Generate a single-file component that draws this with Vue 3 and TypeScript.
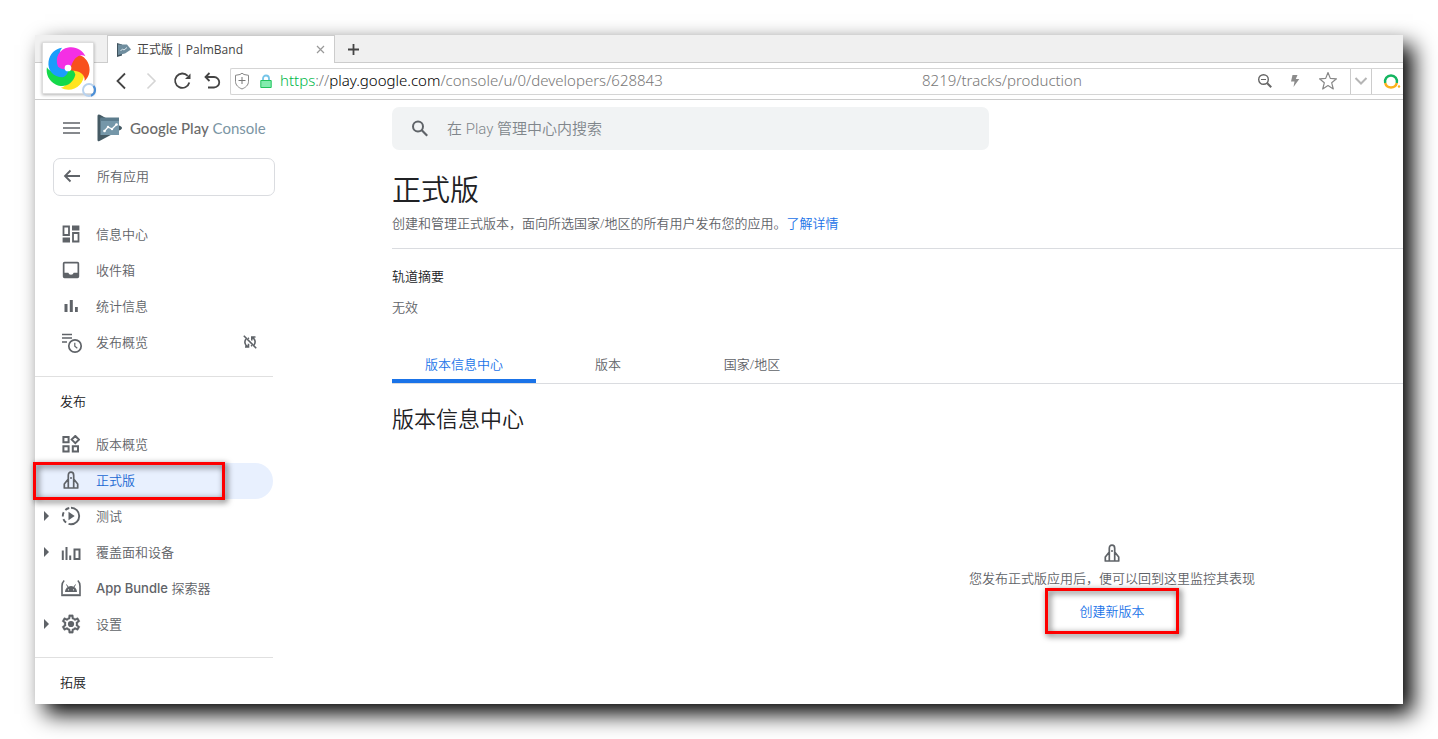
<script setup lang="ts">
import { ref } from 'vue'

interface NavItem {
  id: string
  label: string
  product?: string
  icon: string
  expandable?: boolean
  syncOff?: boolean
  marked?: boolean
}

const topItems: NavItem[] = [
  { id: 'dashboard', label: '信息中心', icon: 'dashboard' },
  { id: 'inbox', label: '收件箱', icon: 'inbox' },
  { id: 'stats', label: '统计信息', icon: 'stats' },
  { id: 'publishing', label: '发布概览', icon: 'publishing', syncOff: true },
]

const releaseItems: NavItem[] = [
  { id: 'overview', label: '版本概览', icon: 'overview' },
  { id: 'production', label: '正式版', icon: 'rocket', marked: true },
  { id: 'testing', label: '测试', icon: 'testing', expandable: true },
  { id: 'reach', label: '覆盖面和设备', icon: 'reach', expandable: true },
  { id: 'bundle', product: 'App Bundle', label: ' 探索器', icon: 'bundle' },
  { id: 'setup', label: '设置', icon: 'setup', expandable: true },
]

const groups = [
  { title: '', items: topItems },
  { title: '发布', items: releaseItems },
  { title: '拓展', items: [] as NavItem[] },
]

const tabs = ['版本信息中心', '版本', '国家/地区']
const activeTab = ref(0)
const activeItem = ref('production')
const query = ref('')

const petals = [
  { color: '#ffe51f', angle: 134 },
  { color: '#14d94a', angle: 206 },
  { color: '#1b9dfb', angle: 278 },
  { color: '#f8501d', angle: 62 },
  { color: '#f42fe4', angle: -10 },
]
</script>

<template>
  <div class="page">
    <div class="window">
      <header class="chrome">
        <div class="tab-strip">
          <div class="browser-tab">
            <svg class="favicon" viewBox="0 0 14 14" aria-hidden="true">
              <path d="M0 0l5 1.5v11L0 14z" fill="#3f525d" />
              <path d="M1 1.500h9l4 5L8 10.500 1 12z" fill="#6f8d9e" />
              <path d="M3.500 8l2-2 1.500 1 3-2.500" fill="none" stroke="#dce8ee" />
            </svg>
            <span class="tab-title">正式版 | PalmBand</span>
            <button class="tab-close" aria-label="关闭标签页">
              <svg width="9" height="9" viewBox="0 0 9 9"><path d="M1 1l7 7M8 1L1 8" fill="none" stroke="#999" stroke-width="1.200" /></svg>
            </button>
          </div>
          <button class="new-tab" aria-label="新建标签页">
            <svg width="11" height="11" viewBox="0 0 11 11"><path d="M5.500 0v11M0 5.500h11" fill="none" stroke="#444" stroke-width="1.800" /></svg>
          </button>
        </div>

        <div class="toolbar">
          <button class="tool" aria-label="后退">
            <svg width="20" height="20" viewBox="0 0 20 20"><path d="M14 2.500L6.500 10l7.500 7.500" fill="none" stroke="#444" stroke-width="1.800" /></svg>
          </button>
          <button class="tool" aria-label="前进">
            <svg width="20" height="20" viewBox="0 0 20 20"><path d="M6.500 2.500L14 10l-7.500 7.500" fill="none" stroke="#d5d5d5" stroke-width="1.600" /></svg>
          </button>
          <button class="tool reload" aria-label="刷新">
            <svg width="20" height="20" viewBox="0 0 20 20">
              <path d="M17.300 11.500a7.200 7.200 0 1 1-1.600-6.600" fill="none" stroke="#444" stroke-width="1.800" />
              <path d="M18.500 2.500v5.500H13z" fill="#444" />
            </svg>
          </button>
          <button class="tool undo" aria-label="撤销">
            <svg width="20" height="20" viewBox="0 0 20 20"><path d="M7.500 2L3.500 6l4 4M3.500 6h8.500a5 5 0 0 1 0 10.500H6" fill="none" stroke="#444" stroke-width="1.800" /></svg>
          </button>

          <div class="address">
            <svg class="shield" width="16" height="18" viewBox="0 0 16 18">
              <path d="M8 1.200l2 1.300 4.500.8v6c0 4-3 6.200-6.500 7.700C4.500 15.500 1.500 13.300 1.500 9.300v-6L6 2.500z" fill="none" stroke="#888" />
              <path d="M8 5v7M4.500 8.500h7" fill="none" stroke="#777" />
            </svg>
            <svg class="lock" width="12" height="15" viewBox="0 0 12 15">
              <path d="M3 7V4.500a3 3 0 0 1 6 0V7" fill="none" stroke="#74c4e8" stroke-width="1.800" />
              <path d="M.8 6.500h10.400v7H.8z" fill="#83ecae" stroke="#21c45d" />
            </svg>
            <span class="url url-head"><span class="scheme">https</span>://<span class="host">play.google.com</span>/console/u/0/developers/628843</span>
            <span class="url url-tail">8219/tracks/production</span>
            <button class="tool" aria-label="缩小">
              <svg width="16" height="16" viewBox="0 0 16 16"><circle cx="6.500" cy="6.500" r="4.800" fill="none" stroke="#666" stroke-width="1.400" /><path d="M10.200 10.200l4 4" stroke="#666" stroke-width="2" /><path d="M4 6.500h5" stroke="#666" /></svg>
            </button>
            <button class="tool" aria-label="极速模式">
              <svg width="10" height="14" viewBox="0 0 10 14"><path d="M2.500 1h5L5.800 5h3.500L3.500 13l1-5.500H1z" fill="#8c8c8c" /></svg>
            </button>
            <button class="tool star" aria-label="收藏">
              <svg width="20" height="20" viewBox="0 0 20 20"><path d="M10 1.500l2.300 5.900 6.200.4-4.800 4 1.600 6.200L10 14.600 4.700 18l1.600-6.200-4.800-4 6.200-.4z" fill="none" stroke="#888" stroke-width="1.200" stroke-linejoin="round" /></svg>
            </button>
            <button class="drop" aria-label="更多">
              <svg width="14" height="10" viewBox="0 0 14 10"><path d="M1.500 2L7 7.500 12.500 2" fill="none" stroke="#b5b5b5" stroke-width="2" /></svg>
            </button>
            <button class="engine" aria-label="搜索引擎">
              <svg width="18" height="18" viewBox="0 0 18 18">
                <path d="M2.200 11A6 6 0 1 1 13.800 11" fill="none" stroke="#14b560" stroke-width="2.500" />
                <path d="M2.200 11A6 6 0 0 0 13.800 11" fill="none" stroke="#fbb01b" stroke-width="2.500" />
                <circle cx="16" cy="14.500" r="1.200" fill="#fbb01b" />
              </svg>
            </button>
          </div>
        </div>

        <div class="browser-logo">
          <svg viewBox="-26 -26 52 52" width="50" height="50">
            <g v-for="p in petals" :key="p.color" :transform="`rotate(${p.angle})`">
              <path d="M-10-3C-12-14-5-21 4-21 12-21 18-16 20-9 14-13 8-9 4-2L0 0Q-6 2-10-3z" :fill="p.color" />
            </g>
            <circle r="3.500" fill="#fff" />
          </svg>
        </div>
        <svg class="spinner" viewBox="0 0 16 16" width="16" height="16">
          <circle cx="8" cy="8" r="6" fill="none" stroke="#b8d2ee" stroke-width="2" />
          <path d="M12.500 4a6 6 0 0 1-2.500 9.700" fill="none" stroke="#4d8fd6" stroke-width="2" />
        </svg>
      </header>

      <div class="body">
        <aside class="sidebar">
          <div class="brand">
            <button class="menu" aria-label="菜单">
              <svg width="18" height="12" viewBox="0 0 18 12"><path d="M0 1h17M0 6h17M0 11h17" stroke="#5f6368" stroke-width="1.700" /></svg>
            </button>
            <svg class="brand-mark" width="26" height="28" viewBox="0 0 26 28">
              <path d="M1.500 0.500Q0.500 0.500 0.500 2v24Q0.500 28 2.500 27L24 15.500q2-1.500 0-3L3 .8z" fill="#455a64" />
              <path d="M3.500 4.500H22v16.500H3.500z" fill="#7597a9" />
              <path d="M3.500 3.500H22V7H3.500z" fill="#5c7c8d" />
              <path d="M7.500 17l3.500-4 4 2 4.500-4.500" fill="none" stroke="#fff" stroke-width="1.300" />
              <g fill="#fff"><circle cx="7.500" cy="17" r="1.300" /><circle cx="11" cy="13" r="1.200" /><circle cx="15" cy="15" r="1.200" /><circle cx="19.500" cy="10.500" r="1.300" /></g>
            </svg>
            <span class="brand-name"><b>Google Play</b> Console</span>
          </div>

          <button class="back">
            <svg width="18" height="14" viewBox="0 0 18 14"><path d="M17 7H2M7.500 1.500L2 7l5.500 5.500" fill="none" stroke="#5f6368" stroke-width="1.800" /></svg>
            <span class="label">所有应用</span>
          </button>

          <nav>
            <section v-for="g in groups" :key="g.title" class="group">
              <h3 v-if="g.title" class="group-title">{{ g.title }}</h3>
              <a
                v-for="item in g.items"
                :key="item.id"
                href="#"
                class="item"
                :class="{ active: activeItem === item.id }"
                @click.prevent="activeItem = item.id"
              >
                <span class="caret"><i v-if="item.expandable" /></span>
                <span class="glyph">
                  <svg v-if="item.icon === 'dashboard'" width="18" height="18" viewBox="0 0 18 18">
                    <path d="M1.500 1.500h5.500v8.500H1.500zM11 8h5.500v8.500H11z" fill="none" stroke="#5f6368" stroke-width="1.800" />
                    <path d="M10 .6h7.400v5H10zM.6 12.400H8v5H.6z" fill="#5f6368" />
                  </svg>
                  <svg v-else-if="item.icon === 'inbox'" width="18" height="18" viewBox="0 0 18 18">
                    <path fill-rule="evenodd" d="M2.500.8h13q1.700 0 1.700 1.700v13q0 1.700-1.700 1.700h-13Q.8 17.200.8 15.500v-13Q.8.800 2.500.8zM2.500 2.500v9.200h3.800a2.800 2.800 0 0 0 5.400 0h3.800V2.500z" fill="#5f6368" />
                  </svg>
                  <svg v-else-if="item.icon === 'stats'" width="18" height="18" viewBox="0 0 18 18">
                    <path d="M2.500 7h3v8h-3zM7.800 3h3v12h-3zM13 10h2.800v5H13z" fill="#5f6368" />
                  </svg>
                  <svg v-else-if="item.icon === 'publishing'" class="wide" width="22" height="22" viewBox="0 0 22 22">
                    <path d="M1 2.500h10M1 6h10M1 10h5" stroke="#5f6368" stroke-width="1.700" />
                    <circle cx="14" cy="14" r="6.200" fill="none" stroke="#5f6368" stroke-width="1.700" />
                    <path d="M13.800 10.800v3.500l2.500 2" fill="none" stroke="#5f6368" stroke-width="1.200" />
                  </svg>
                  <svg v-else-if="item.icon === 'overview'" width="18" height="18" viewBox="0 0 18 18">
                    <path d="M1.400 2h5.200v5.200H1.400zM1.400 11.300h5.200v5.200H1.400zM10.800 11.300H16v5.200h-5.200zM13.300 1l3.600 3.600-3.600 3.600-3.600-3.600z" fill="none" stroke="#5f6368" stroke-width="2" />
                  </svg>
                  <svg v-else-if="item.icon === 'rocket'" width="18" height="20" viewBox="0 0 18 20">
                    <path d="M6.300 18V5.500Q6.300 2.200 9 2.200t2.700 3.300V18M6.300 9L2.300 14v4h13.400v-4L11.700 9" fill="none" stroke="#5f6368" stroke-width="1.700" stroke-linejoin="round" />
                    <circle cx="9" cy="8" r="1" fill="#5f6368" />
                  </svg>
                  <svg v-else-if="item.icon === 'testing'" width="20" height="20" viewBox="0 0 20 20">
                    <path d="M10 1.800a8.200 8.200 0 0 1 0 16.400" fill="none" stroke="#5f6368" stroke-width="1.900" />
                    <path d="M10 1.800a8.200 8.200 0 0 0 0 16.400" fill="none" stroke="#5f6368" stroke-width="1.900" stroke-dasharray="4.400 2.700" stroke-dashoffset="-1.800" />
                    <path d="M7.500 5.800l6.200 4.200-6.200 4.200z" fill="#5f6368" />
                  </svg>
                  <svg v-else-if="item.icon === 'reach'" class="low" width="20" height="18" viewBox="0 0 20 18">
                    <path d="M.8 6.500h2V16h-2zM4.500 3h2v13h-2zM8.200 11.500h2V16h-2z" fill="#5f6368" />
                    <path d="M13.500 5.500h5V15h-5z" fill="none" stroke="#5f6368" stroke-width="2" />
                  </svg>
                  <svg v-else-if="item.icon === 'bundle'" width="20" height="18" viewBox="0 0 20 18">
                    <path d="M3.200 1.500Q1 3.500 1 7v8.500M19 15.500V7q0-3.500-2.200-5.500" fill="none" stroke="#5f6368" stroke-width="1.600" />
                    <path d="M.2 15.200h19.600v2H.2z" fill="#5f6368" />
                    <path d="M4 13a6 6 0 0 1 12 0z" fill="#5f6368" />
                    <path d="M5.500 5.500l1.800 3M14.500 5.500l-1.800 3" stroke="#5f6368" />
                    <circle cx="7.500" cy="10.800" r=".6" fill="#fff" /><circle cx="12.500" cy="10.800" r=".6" fill="#fff" />
                  </svg>
                  <svg v-else width="22" height="22" viewBox="0 0 24 24">
                    <path fill="#5f6368" stroke="#5f6368" stroke-width=".3" d="M19.430 12.980c.04-.32.07-.64.07-.98s-.03-.66-.07-.98l2.110-1.650c.19-.15.24-.42.12-.64l-2-3.460a.5.5 0 0 0-.61-.22l-2.490 1c-.52-.4-1.080-.73-1.690-.98l-.38-2.650A.488.488 0 0 0 14 2h-4c-.25 0-.46.18-.49.42l-.38 2.650c-.61.25-1.170.59-1.690.98l-2.490-1a.5.5 0 0 0-.61.22l-2 3.460c-.13.22-.07.49.12.64l2.110 1.650c-.04.32-.07.65-.07.98s.03.66.07.98l-2.110 1.650c-.19.15-.24.42-.12.64l2 3.460c.12.22.37.3.61.22l2.490-1c.52.4 1.080.73 1.690.98l.38 2.650c.03.24.24.42.49.42h4c.25 0 .46-.18.49-.42l.38-2.650c.61-.25 1.170-.59 1.690-.98l2.490 1c.24.08.49 0 .61-.22l2-3.460c.12-.22.07-.49-.12-.64zm-1.980-1.710c.04.31.05.52.05.73s-.02.43-.05.73l-.14 1.130.89.7 1.080.84-.7 1.210-1.270-.51-1.040-.42-.9.680c-.43.32-.84.56-1.250.73l-1.060.43-.16 1.130-.2 1.350h-1.400l-.35-2.480-1.060-.43c-.43-.18-.83-.41-1.230-.71l-.91-.7-1.060.43-1.270.51-.7-1.210 1.080-.84.89-.7-.14-1.130c-.03-.31-.05-.54-.05-.74s.02-.43.05-.73l.14-1.130-.89-.7-1.080-.84.7-1.210 1.270.51 1.040.42.9-.68c.43-.32.84-.56 1.250-.73l1.060-.43.16-1.130.2-1.350h1.390l.35 2.480 1.060.43c.43.18.83.41 1.230.71l.91.7 1.060-.43 1.270-.51.7 1.210-1.070.85-.89.7z" />
                    <circle cx="12" cy="12" r="3.400" fill="#5f6368" />
                  </svg>
                </span>
                <span class="label"><span v-if="item.product" class="product">{{ item.product }}</span>{{ item.label }}</span>
                <svg v-if="item.syncOff" class="sync-off" width="14" height="14" viewBox="0 0 14 14">
                  <path d="M.8.8l12.400 12.400" stroke="#5f6368" stroke-width="1.600" />
                  <path d="M3 4a5 5 0 0 0 1.500 7.500M2 12h3.500V8.800M11 10a5 5 0 0 0-1.500-7.500M12.500 2H8.800v3.500M6 3L5 3.600M8 11l1-.6" fill="none" stroke="#5f6368" stroke-width="1.600" />
                </svg>
                <span v-if="item.marked" class="mark" />
              </a>
            </section>
          </nav>
        </aside>

        <main class="main">
          <label class="search">
            <svg width="18" height="18" viewBox="0 0 18 18"><circle cx="7" cy="6.500" r="5" fill="none" stroke="#5f6368" stroke-width="2" /><path d="M10.800 10.300l5.400 5.400" stroke="#5f6368" stroke-width="2.200" /></svg>
            <input v-model="query" type="text" aria-label="搜索" placeholder="在 Play 管理中心内搜索" />
          </label>

          <div class="content">
            <div class="intro">
              <h1>正式版</h1>
              <p>创建和管理正式版本，面向所选国家/地区的所有用户发布您的应用。<a href="#">了解详情</a></p>
            </div>

            <div class="summary">
              <h4>轨道摘要</h4>
              <p>无效</p>
            </div>

            <div class="tabs" role="tablist">
              <button
                v-for="(t, i) in tabs"
                :key="t"
                role="tab"
                class="tab"
                :class="{ selected: activeTab === i }"
                :aria-selected="activeTab === i"
                @click="activeTab = i"
              >{{ t }}</button>
            </div>

            <h2>版本信息中心</h2>

            <div class="empty">
              <svg width="18" height="20" viewBox="0 0 18 20">
                <path d="M6.300 18V5.500Q6.300 2.200 9 2.200t2.700 3.300V18M6.300 9L2.300 14v4h13.400v-4L11.700 9" fill="none" stroke="#5f6368" stroke-width="1.700" stroke-linejoin="round" />
                <circle cx="9" cy="8" r="1" fill="#5f6368" />
              </svg>
              <p>您发布正式版应用后，便可以回到这里监控其表现</p>
              <button class="create">创建新版本<span class="mark" /></button>
            </div>
          </div>
        </main>
      </div>
    </div>
  </div>
</template>

<style>
body {
  margin: 0;
  background: #fff;
}
</style>

<style scoped>
* {
  box-sizing: border-box;
}

.page {
  display: flex;
  min-height: 100vh;
  padding: 35px;
  overflow: hidden;
  font: 350 13px/20px "Open Sans", "Noto Sans CJK SC", sans-serif;
  color: #5f6368;
}

button {
  padding: 0;
  border: 0;
  background: none;
  font: inherit;
  color: inherit;
  cursor: pointer;
}

h1, h2, h3, h4, p {
  margin: 0;
  font-weight: 350;
}

a {
  color: #1a73e8;
  text-decoration: none;
}

svg {
  display: block;
  flex: none;
}

.window {
  display: flex;
  flex: 1;
  flex-direction: column;
  min-width: 0;
  background: #fff;
  box-shadow: 10px 10px 21px #000;
}

/* Browser chrome */
.chrome {
  position: relative;
  border-bottom: 1px solid #ccc;
}

.tab-strip {
  display: flex;
  height: 28px;
  padding-left: 72px;
  background: #f0f0f0;
  box-shadow: inset 0 -1px #ccc;
}

.browser-tab {
  display: flex;
  align-items: center;
  width: 228px;
  padding: 0 9px;
  border: solid #ccc;
  border-width: 1px 1px 0;
  background: #fff;
}

.favicon {
  width: 14px;
  height: 14px;
}

.tab-title {
  flex: 1;
  margin-left: 6px;
  font-size: 12px;
  font-weight: 400;
  color: #444;
}

.new-tab {
  display: grid;
  place-items: center;
  width: 36px;
}

.toolbar {
  display: flex;
  align-items: center;
  height: 36px;
  padding-left: 71px;
}

.tool {
  display: grid;
  flex: none;
  place-items: center;
  width: 30px;
  height: 24px;
}

.reload {
  width: 32px;
}

.undo {
  width: 28px;
}

.address {
  display: flex;
  flex: 1;
  align-items: center;
  min-width: 0;
  height: 27px;
  margin-left: 4px;
  padding-left: 3px;
  overflow: hidden;
  border: solid #d5d5d5;
  border-width: 1px 0 1px 1px;
  border-radius: 2px 0 0 2px;
}

.lock {
  margin: 0 8px 0 10px;
}

.url {
  padding-bottom: 2px;
  font-family: "Noto Sans", sans-serif;
  font-size: 15px;
  font-weight: 300;
  white-space: nowrap;
  color: #777;
}

.url-head {
  width: 388px;
}

.url-tail {
  flex: 1;
  margin-left: 254px;
}

.scheme {
  color: #00b84a;
}

.host {
  color: #000;
}

.star {
  width: 36px;
  margin-right: 4px;
}

.drop {
  display: grid;
  flex: none;
  place-items: center;
  width: 22px;
  height: 25px;
  border: solid #ccc;
  border-width: 0 1px;
}

.engine {
  padding: 0 2px 0 11px;
}

.browser-logo {
  position: absolute;
  top: 7px;
  left: 7px;
  display: grid;
  place-items: center;
  width: 52px;
  height: 52px;
  border: 1px solid #ddd;
  background: #fff;
  box-shadow: 0 1px 3px rgba(0, 0, 0, 0.3);
}

.spinner {
  position: absolute;
  top: 47px;
  left: 46px;
}

/* Console layout */
.body {
  display: flex;
  flex: 1;
  min-width: 0;
}

.sidebar {
  flex: none;
  width: 240px;
}

.brand {
  display: flex;
  align-items: center;
  height: 58px;
  padding: 0 0 2px 28px;
}

.brand-mark {
  margin: 0 7px 0 16px;
}

.brand-name {
  font-family: Lato, sans-serif;
  font-size: 15px;
  font-weight: 400;
  white-space: nowrap;
  color: #7b95a3;
}

.brand-name b {
  font-weight: 500;
  color: #6b6b6b;
}

.back {
  display: flex;
  align-items: center;
  gap: 16px;
  width: 222px;
  height: 38px;
  margin: 0 0 21px 18px;
  padding: 0 9px 2px;
  border: 1px solid #dadce0;
  border-radius: 7px;
  text-align: left;
}

.group {
  width: 238px;
}

.group + .group {
  margin-top: 14px;
  border-top: 1px solid #e0e0e0;
}

.group:first-child {
  padding-bottom: 1px;
}

.group-title {
  padding: 14px 25px 16px;
  font-size: 13px;
  color: #202124;
}

.group:last-child .group-title {
  padding-bottom: 8px;
}

.item {
  position: relative;
  display: flex;
  align-items: center;
  height: 36px;
  padding-bottom: 2px;
  border-radius: 0 18px 18px 0;
  color: #5f6368;
}

.item.active {
  background: #e8f0fe;
  color: #1967d2;
}

.caret {
  display: grid;
  place-items: center;
  width: 22px;
}

.caret i {
  border: solid transparent;
  border-width: 5px 0 5px 5px;
  border-left-color: #5f6368;
}

.glyph {
  display: grid;
  place-items: center;
  width: 28px;
  margin-right: 11px;
}

.wide {
  margin: 2px 0 0 2px;
}

.low {
  margin-top: 2px;
}

.label {
  flex: 1;
  padding-bottom: 1px;
  white-space: nowrap;
  font-family: Inter, "Noto Sans CJK SC", sans-serif;
}

.product {
  font-weight: 500;
}

.sync-off {
  margin-right: 16px;
}

.mark {
  position: absolute;
  border: 3px solid #fe0000;
  filter: drop-shadow(2px 2px 3px rgba(0, 0, 0, 0.7));
  pointer-events: none;
}

.item .mark {
  inset: -1px 48px -1px -2px;
}

/* Main column */
.main {
  flex: 1;
  min-width: 0;
  padding: 7px 0 0 117px;
  overflow: hidden;
}

.search {
  display: flex;
  align-items: center;
  gap: 18px;
  max-width: 597px;
  height: 43px;
  padding: 0 19px;
  border-radius: 7px;
  background: #f1f3f4;
}

.search input {
  flex: 1;
  padding: 1px 0 0;
  border: 0;
  outline: 0;
  background: none;
  font: inherit;
  font-family: Roboto, "Noto Sans CJK SC", sans-serif;
  font-size: 15px;
  color: #202124;
}

.search input::placeholder {
  color: #80868b;
  opacity: 1;
}

.content {
  min-width: 1440px;
}

.intro {
  padding: 20px 0 15px;
  border-bottom: 1px solid #dadce0;
}

h1 {
  font-size: 29px;
  line-height: 40px;
  color: #202124;
}

.intro p {
  margin-top: 3px;
}

.summary {
  display: grid;
  gap: 11px;
  padding: 17px 0 28px;
}

h4 {
  font-size: 13px;
  color: #202124;
}

.tabs {
  display: flex;
  border-bottom: 1px solid #dadce0;
}

.tab {
  width: 144px;
  height: 38px;
  padding-top: 3px;
  border-bottom: 4px solid transparent;
}

.tab.selected {
  border-radius: 2px 2px 0 0;
  background: linear-gradient(#1a73e8, #1a73e8) bottom / 100% 4px no-repeat border-box;
  color: #1a73e8;
}

h2 {
  padding: 18px 0 22px;
  font-size: 22px;
  line-height: 32px;
  color: #202124;
}

.empty {
  display: flex;
  flex-direction: column;
  align-items: center;
  padding-top: 87px;
}

.empty p {
  margin-top: 5px;
}

.create {
  position: relative;
  width: 134px;
  height: 46px;
  color: #1a73e8;
}

.create .mark {
  inset: 0;
}
</style>
